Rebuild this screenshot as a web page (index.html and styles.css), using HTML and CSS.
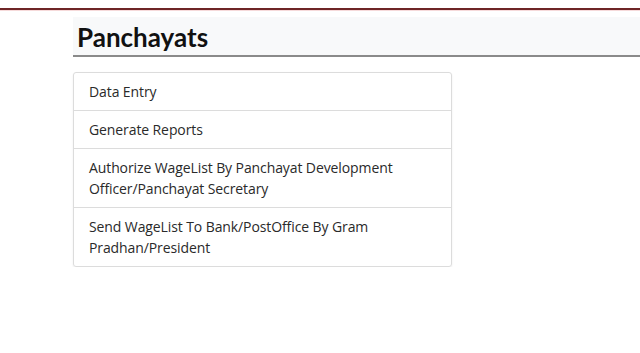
FILE: index.html
```html
<!DOCTYPE html>
<html>
<head>
<meta charset="utf-8">
<link rel="stylesheet" href="styles.css">
</head>
<body>
<div class="topbar"></div>
<main class="content">
  <div class="page-title"><h1>Panchayats</h1></div>
  <ul class="menu">
    <li>Data Entry</li>
    <li>Generate Reports</li>
    <li>Authorize WageList By Panchayat Development Officer/Panchayat Secretary</li>
    <li>Send WageList To Bank/PostOffice By Gram Pradhan/President</li>
  </ul>
</main>
</body>
</html>
```
FILE: styles.css
```css
html, body {
  margin: 0;
  padding: 0;
  background: #fff;
  font-family: "Open Sans", "Noto Sans", sans-serif;
  color: #212529;
}
.topbar {
  height: 8px;
  border-bottom: 2px solid #6e2526;
  box-shadow: 0 1px 0 #f6dada;
}
.content {
  padding: 7px 0 0 73px;
}
.page-title {
  background: #f8f9fa;
  border-bottom: 2px solid #8a8a8a;
  height: 38px;
  display: flex;
  align-items: center;
  padding-left: 4px;
}
.page-title h1 {
  margin: 2px 0 0 0;
  font-family: Lato, "Open Sans", sans-serif;
  font-size: 26px;
  font-weight: 700;
  color: #111;
}
.menu {
  list-style: none;
  margin: 15px 0 0 0;
  padding: 0;
  box-sizing: border-box;
  width: 379px;
  border: 1px solid #dcdcdc;
  border-radius: 3px;
  box-shadow: 0 1px 2px rgba(0,0,0,0.08);
}
.menu li {
  padding: 8px 15px;
  font-size: 14px;
  line-height: 21px;
  color: #2a2a2a;
  letter-spacing: -0.1px;
  border-top: 1px solid #dcdcdc;
}
.menu li:first-child {
  border-top: none;
}
```
